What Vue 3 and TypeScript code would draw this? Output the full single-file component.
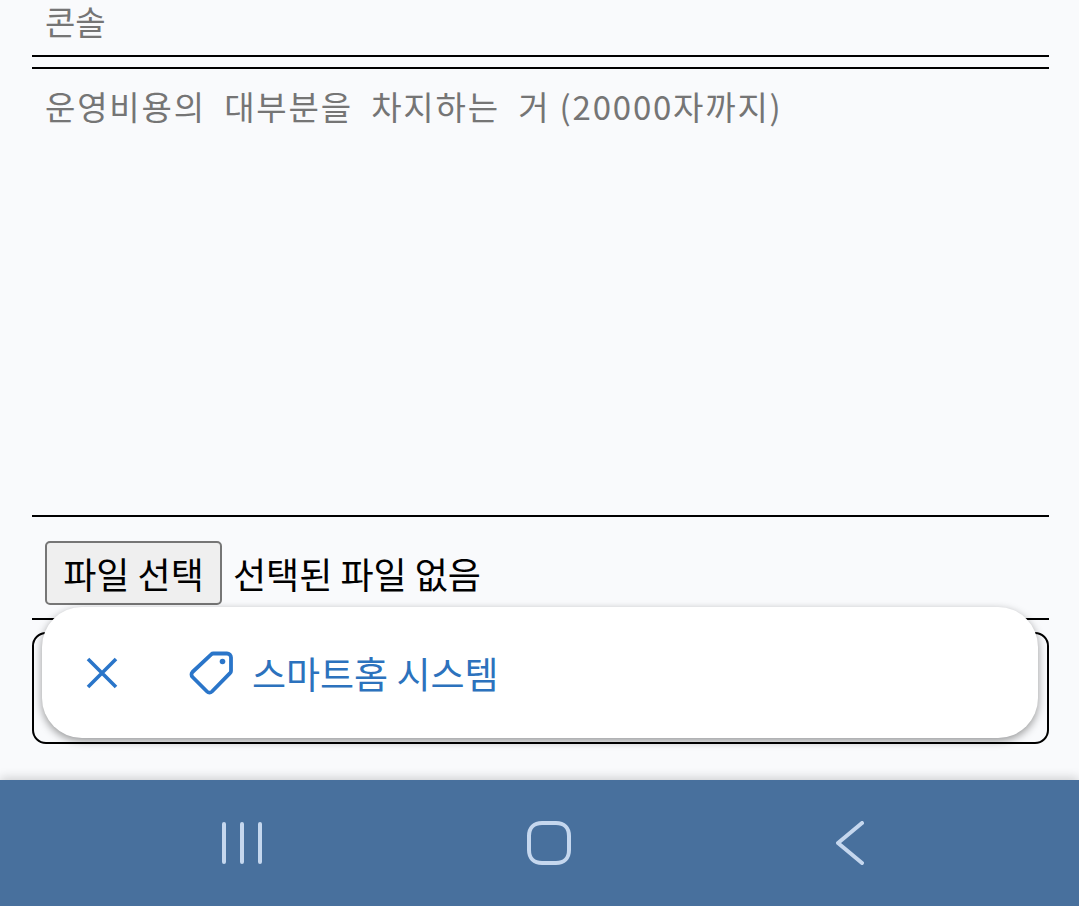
<template>
  <div class="screen">
    <form class="post-form" @submit.prevent>
      <div class="field title-field"><span class="placeholder">콘솔</span></div>
      <div class="field body-field">
        <span class="placeholder body-placeholder">운영비용의 &nbsp;대부분을 &nbsp;차지하는 &nbsp;거 (20000자까지)</span>
      </div>
      <div class="file-row">
        <button type="button" class="file-btn">파일 선택</button>
        <span class="file-name">선택된 파일 없음</span>
      </div>
      <div class="submit-box"></div>
    </form>

    <div class="tag-pill">
      <svg class="close-icon" viewBox="0 0 32 32" width="32" height="32" aria-hidden="true">
        <path d="M2 2 30 30M30 2 2 30" fill="none" stroke="currentColor" stroke-width="3.6" />
      </svg>
      <svg class="tag-icon" viewBox="0 0 46 46" width="46" height="46" aria-hidden="true">
        <path d="M25.5 3.5h13.5a4 4 0 0 1 4 4v13.5a3 3 0 0 1-1 2.2L24 41.5a3.6 3.6 0 0 1-5 0L4.5 27a3.6 3.6 0 0 1 0-5L23.3 4.4a3 3 0 0 1 2.2-.9Z" fill="none" stroke="currentColor" stroke-width="3.8" stroke-linejoin="round" />
        <circle cx="34.5" cy="11.5" r="2.8" fill="currentColor" />
      </svg>
      <span class="tag-label">스마트홈 시스템</span>
    </div>

    <nav class="nav-bar">
      <svg viewBox="0 0 40 42" width="40" height="42" aria-hidden="true">
        <path d="M2 2v38M20 2v38M38 2v38" class="nav-stroke" />
      </svg>
      <svg viewBox="0 0 44 44" width="44" height="44" aria-hidden="true">
        <path d="M15 2h14c8 0 13 5 13 13v14c0 8-5 13-13 13H15C7 42 2 37 2 29V15C2 7 7 2 15 2Z" class="nav-stroke" />
      </svg>
      <svg viewBox="0 0 28 44" width="28" height="44" aria-hidden="true">
        <path d="M26 2 2 22l24 20" class="nav-stroke" />
      </svg>
    </nav>
  </div>
</template>

<script setup lang="ts">
</script>

<style>
html,
body {
  margin: 0;
  background: #f9fafc;
}
</style>

<style scoped>
.screen {
  position: relative;
  width: 1079px;
  height: 906px;
  overflow: hidden;
  display: flex;
  flex-direction: column;
  background: #f9fafc;
  font-family: "Noto Sans CJK KR", "Noto Sans", sans-serif;
}

.post-form {
  flex: 1;
  padding: 0 30px 0 32px;
  display: flex;
  flex-direction: column;
}

.field {
  padding: 0 13px;
  color: #757575;
  font-size: 33px;
}

.title-field {
  height: 55px;
  border-bottom: 2px solid #000;
  line-height: 42px;
}

.body-field {
  margin-top: 10px;
  height: 448px;
  border-top: 2px solid #000;
  border-bottom: 2px solid #000;
  padding-top: 15px;
  box-sizing: content-box;
  height: 431px;
  line-height: 44px;
}

.body-placeholder {
  letter-spacing: 1.8px;
}

.file-row {
  height: 101px;
  border-bottom: 2px solid #000;
  padding: 24px 13px 0;
  box-sizing: border-box;
  height: 103px;
  display: flex;
  align-items: flex-start;
  gap: 11px;
}

.file-btn {
  width: 177px;
  height: 64px;
  padding: 0;
  border: 2px solid #767676;
  border-radius: 5px;
  background: #efefef;
  color: #000;
  font: inherit;
  font-size: 36px;
  line-height: 60px;
}

.file-name {
  color: #000;
  font-size: 36px;
  line-height: 64px;
}

.submit-box {
  margin-top: 12px;
  height: 112px;
  box-sizing: border-box;
  border: 2px solid #000;
  border-radius: 14px;
}

.tag-pill {
  position: absolute;
  left: 42px;
  top: 607px;
  width: 996px;
  height: 131px;
  box-sizing: border-box;
  padding-left: 44px;
  display: flex;
  align-items: center;
  background: #fff;
  border-radius: 40px;
  box-shadow: 0 3px 8px rgba(0, 0, 0, 0.4);
  color: #2a75c9;
}

.close-icon {
  flex: none;
}

.tag-icon {
  flex: none;
  margin-left: 70px;
}

.tag-label {
  margin-left: 18px;
  font-size: 37px;
  line-height: 50px;
  color: #2c72bd;
}

.nav-bar {
  height: 126px;
  flex: none;
  display: flex;
  align-items: center;
  justify-content: space-between;
  padding: 0 215px 0 222px;
  background: #48709d;
  box-shadow: 0 -2px 10px rgba(0, 0, 0, 0.18);
}

.nav-stroke {
  fill: none;
  stroke: #c5d7ee;
  stroke-width: 4;
  stroke-linecap: round;
  stroke-linejoin: round;
}
</style>
